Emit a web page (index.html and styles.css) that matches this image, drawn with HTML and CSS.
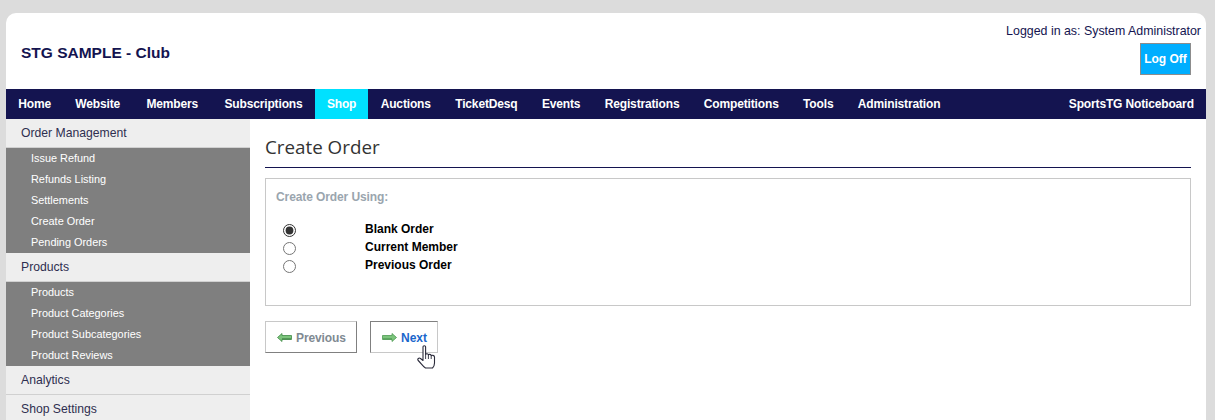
FILE: index.html
```html
<!DOCTYPE html>
<html lang="en">
<head>
<meta charset="utf-8">
<title>Create Order</title>
<link rel="stylesheet" href="styles.css">
</head>
<body>
<div class="page">
  <header class="header">
    <h1 class="club">STG SAMPLE - Club</h1>
    <div class="user">
      <div class="logged">Logged in as: System Administrator</div>
      <a class="logoff">Log Off</a>
    </div>
  </header>
  <nav class="nav">
    <a>Home</a><a class="wide">Website</a><a class="wide">Members</a><a>Subscriptions</a><a class="active">Shop</a><a>Auctions</a><a>TicketDesq</a><a>Events</a><a>Registrations</a><a>Competitions</a><a>Tools</a><a>Administration</a>
    <a class="notice">SportsTG Noticeboard</a>
  </nav>
  <div class="body">
    <aside class="side">
      <div class="group">Order Management</div>
      <ul class="sub">
        <li>Issue Refund</li><li>Refunds Listing</li><li>Settlements</li><li>Create Order</li><li>Pending Orders</li>
      </ul>
      <div class="group">Products</div>
      <ul class="sub">
        <li>Products</li><li>Product Categories</li><li>Product Subcategories</li><li>Product Reviews</li>
      </ul>
      <div class="group analytics">Analytics</div>
      <div class="group last">Shop Settings</div>
    </aside>
    <main class="main">
      <h2 class="title">Create Order</h2>
      <section class="box">
        <h3 class="legend">Create Order Using:</h3>
        <div class="options">
          <label class="opt"><span class="radio-cell"><input type="radio" name="o" class="radio" checked></span><span>Blank Order</span></label>
          <label class="opt"><span class="radio-cell"><input type="radio" name="o" class="radio"></span><span>Current Member</span></label>
          <label class="opt"><span class="radio-cell"><input type="radio" name="o" class="radio"></span><span>Previous Order</span></label>
        </div>
      </section>
      <div class="buttons">
        <a class="btn prev">
          <svg class="arrow" width="15" height="9" viewBox="0 0 15 9"><path d="M0.5 4.5 L5 0.5 V2.5 H14.5 V6.5 H5 V8.5 Z" fill="#7cc47c" stroke="#3f8a45" stroke-width="0.8"/><path d="M5 5.5 H14 V6.2 H5 Z" fill="#2f6b35"/></svg>
          <span class="label">Previous</span>
        </a>
        <a class="btn next">
          <svg class="arrow" width="15" height="9" viewBox="0 0 15 9"><path d="M14.5 4.5 L10 0.5 V2.5 H0.5 V6.5 H10 V8.5 Z" fill="#7cc47c" stroke="#4c9a52" stroke-width="0.8"/><path d="M1 5.5 H10 V6.2 H1 Z" fill="#3f8a45"/></svg>
          <span class="label">Next</span>
          <svg class="cursor" width="19" height="24" viewBox="0 0 19 24"><path d="M6 1.8 C6 .4 8.6 .4 8.6 1.8 V9.5 C9 8.5 11.2 8.5 11.4 10 C11.8 9 14 9 14.2 10.8 C14.6 10 17.5 10 17.5 12 V18 C17.5 20.5 16.5 22 15.5 23 H8.5 C6 21.5 4 18 1.2 15.5 C0 14 2 12.3 3.5 13.5 L6 15.5 Z" fill="#fff" stroke="#2a2a3a" stroke-width="1.1" stroke-linejoin="round"/><path d="M8.6 9.5 V14 M11.4 10 V14 M14.2 10.8 V14" stroke="#2a2a3a" stroke-width=".9" fill="none"/></svg>
        </a>
      </div>
    </main>
  </div>
</div>
</body>
</html>
```
FILE: styles.css
```css
* { box-sizing: border-box; }
html, body { height: 100%; }
body {
  margin: 0;
  background: #dcdcdc;
  font-family: "Liberation Sans", Arial, sans-serif;
  font-size: 12px;
  overflow: hidden;
}
.page {
  margin: 13px 9px 0 6px;
  background: #fff;
  border-radius: 10px 10px 0 0;
  height: 407px;
  overflow: hidden;
}
.header {
  height: 76px;
  display: flex;
  justify-content: space-between;
  padding: 0 5px 0 15px;
}
.club {
  margin: 31px 0 0;
  font-size: 15.5px;
  line-height: 18px;
  font-weight: bold;
  color: #141450;
}
.user {
  display: flex;
  flex-direction: column;
  align-items: flex-end;
  padding-top: 10px;
}
.logged {
  color: #141450;
  font-size: 12.4px;
  line-height: 16px;
}
.logoff {
  margin: 4px 10px 0 0;
  width: 51px;
  height: 32px;
  background: #00aeff;
  border: 1px solid #8c8c8c;
  color: #fff;
  font-weight: bold;
  font-size: 12px;
  line-height: 30px;
  text-align: center;
}
.nav {
  height: 30px;
  background: #141450;
  display: flex;
  align-items: stretch;
}
.nav a {
  color: #fff;
  font-weight: bold;
  font-size: 12px;
  letter-spacing: -0.15px;
  line-height: 30px;
  padding: 0 12.2px;
}
.nav a.wide {
  padding-right: 14.2px;
}
.nav a.active {
  background: #00e1ff;
}
.nav a.notice {
  margin-left: auto;
}
.body {
  display: flex;
  height: 288px;
}
.side {
  width: 244px;
  background: #eeeeee;
  flex: none;
}
.group {
  height: 29px;
  padding-left: 15px;
  line-height: 28px;
  color: #2e2e50;
  font-size: 12.2px;
  background: #eeeeee;
  border-bottom: 1px solid #d0d0d0;
}
.last { border-bottom: 0; line-height: 29px; }
.sub {
  list-style: none;
  margin: 0;
  padding: 0;
  background: #7f7f7f;
}
.sub li {
  height: 21px;
  line-height: 21px;
  padding-left: 25px;
  color: #fff;
  font-size: 10.9px;
}
.main {
  flex: 1;
  padding: 0 15px;
}
.title {
  margin: 0;
  height: 49px;
  padding-top: 15px;
  font-family: "Open Sans", "Noto Sans", sans-serif;
  font-weight: 400;
  font-size: 18.8px;
  line-height: 26px;
  color: #333;
  border-bottom: 1px solid #141450;
}
.box {
  margin-top: 10px;
  height: 128px;
  border: 1px solid #c8c8c8;
  padding: 11px 10px 10px;
}
.legend {
  margin: 0;
  font-size: 12px;
  letter-spacing: -0.1px;
  line-height: 15px;
  font-weight: bold;
  color: #9aa5ae;
}
.options {
  margin-top: 15px;
}
.opt {
  display: flex;
  align-items: center;
  height: 18px;
  font-weight: bold;
  color: #000;
}
.radio-cell {
  width: 89px;
  padding-left: 7px;
  display: flex;
}
.radio {
  margin: 2px 0 0;
  width: 13px;
  height: 13px;
  accent-color: #333;
}
.buttons {
  margin-top: 15px;
  display: flex;
  gap: 13px;
}
.btn {
  position: relative;
  height: 32px;
  display: flex;
  align-items: center;
  gap: 4px;
  font-weight: bold;
  font-size: 12px;
  background: #fff;
  border: 1px solid;
}
.label {
  padding-top: 2px;
}
.prev {
  width: 92px;
  padding-left: 11px;
  color: #808a92;
  letter-spacing: -0.1px;
  border-color: #c8c8c8 #808080 #808080 #c8c8c8;
}
.next {
  width: 68px;
  padding-left: 11px;
  color: #1a66cc;
  border-color: #808080 #c8c8c8 #c8c8c8 #808080;
}
.cursor {
  position: absolute;
  left: 46px;
  top: 23px;
}
```
